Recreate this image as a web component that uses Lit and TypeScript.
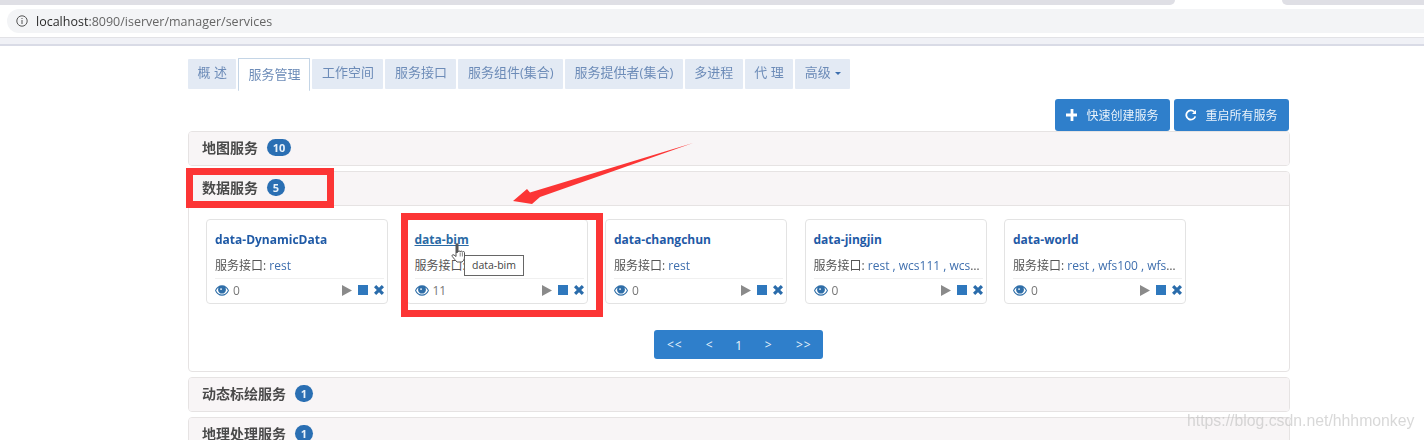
import { LitElement, html, css, svg } from "lit";
import { customElement } from "lit/decorators.js";

const eye = html`<svg class="eye" viewBox="0 0 16 12" width="14" height="11"><path fill="#2f6ea8" d="M8 0C4.400 0 1.500 2.200 0 6c1.500 3.800 4.400 6 8 6s6.500-2.200 8-6c-1.500-3.800-4.400-6-8-6zm0 10.600C5.100 10.600 2.700 8.900 1.300 6 2 4.600 3 3.400 4.200 2.600 3.800 3.300 3.500 4.100 3.500 5c0 2.500 2 4.500 4.500 4.500s4.500-2 4.500-4.500c0-.9-.3-1.700-.7-2.400C13 3.400 14 4.600 14.700 6c-1.400 2.900-3.800 4.600-6.700 4.600z"/><circle cx="8" cy="5.500" r="2.700" fill="#2f6ea8"/><circle cx="6.900" cy="4.300" r="1" fill="#fff"/></svg>`;

const actions = html`<span class="acts">
  <svg viewBox="0 0 10 11" width="10" height="11"><path fill="#8a8a8a" d="M0 0l10 5.500L0 11z"/></svg>
  <svg viewBox="0 0 10 10" width="10" height="10"><rect width="10" height="10" fill="#2f78bd"/></svg>
  <svg viewBox="0 0 10 10" width="10" height="10"><path fill="#2a6cab" d="M2.200 0L5 2.800 7.800 0 10 2.200 7.200 5 10 7.800 7.800 10 5 7.200 2.200 10 0 7.800 2.800 5 0 2.200z"/></svg>
</span>`;

interface Card { name: string; links: string; count: string; hover?: boolean }
const cards: Card[] = [
  { name: "data-DynamicData", links: "rest", count: "0" },
  { name: "data-bim", links: "rest", count: "11", hover: true },
  { name: "data-changchun", links: "rest", count: "0" },
  { name: "data-jingjin", links: "rest , wcs111 , wcs130 , wfs100", count: "0" },
  { name: "data-world", links: "rest , wfs100 , wfs200 , wcs111", count: "0" },
];
const tabs = ["概 述", "服务管理", "工作空间", "服务接口", "服务组件(集合)", "服务提供者(集合)", "多进程", "代 理"];

@customElement("app-root")
export class AppRoot extends LitElement {
  static styles = css`
    :host { display: block; position: relative; width: 1424px; height: 440px; overflow: hidden; background: #fff;
      font-family: "Open Sans", "Noto Sans CJK SC", sans-serif; font-size: 12px; color: #555; }
    .soft { filter: blur(0.35px); height: 440px; }
    .tabstrip { display: flex; height: 5px; }
    .tabstrip i { background: #dfdfe5; flex: 1; }
    .tabstrip i:first-child { flex: 0 0 1175px; border-bottom-right-radius: 5px; }
    .tabstrip i:last-child { border-bottom-left-radius: 5px; }
    .tabstrip b { width: 107px; }
    .addr { display: flex; align-items: center; height: 24px; margin: 4px 0 0 7px; padding-left: 9px; gap: 8px;
      background: #f3f4f6; border-radius: 12px 0 0 12px; font-size: 12.500px; color: #666; font-family: "Open Sans", sans-serif; }
    .addr strong { font-weight: 400; color: #2b2b2b; }
    .strip { height: 6px; margin-top: 4px; background: #f0f1f6; border-top: 1px solid #e2e2e6; border-bottom: 2px solid #d9dbe6; }
    main { padding: 12px 134.500px 0 188px; }
    .tabs { display: flex; gap: 2px; align-items: flex-start; height: 41px; }
    .tab { height: 30px; line-height: 26px; padding: 0 9.500px; background: #e3eaf4; color: #6d8cb8; font-size: 13px; white-space: nowrap; border-radius: 1px; box-sizing: border-box; margin-top: 1px; }
    .tab.active { height: 33px; margin-top: 0; line-height: 31px; background: #fff; border: 1px solid #c4d5e6; border-bottom: 0; padding: 0 9px; }
    .caret { display: inline-block; margin-left: 4px; vertical-align: 2px; border: 3.500px solid transparent; border-top-color: #3d6fae; border-bottom: 0; }
    .btns { display: flex; justify-content: flex-end; gap: 4px; margin-right: 1px; }
    .btn { display: flex; align-items: center; gap: 9px; height: 32px; width: 115px; box-sizing: border-box; padding: 0 11px; background: #2f7fcb; color: #eaf3fb; border-radius: 3px; font-size: 12px; white-space: nowrap; }
    .panel { border: 1px solid #e6e3e3; border-radius: 4px; margin-bottom: 5px; overflow: hidden; background: #fff; }
    .head { display: flex; align-items: center; gap: 9px; height: 33px; box-sizing: border-box; padding: 0 0 3px 13px; background: #f8f5f6; font-size: 14px; font-weight: 700; color: #4a4a4a; }
    .badge { display: inline-flex; align-items: center; justify-content: center; min-width: 18px; height: 17px; border-radius: 9px; background: #2a6fb3; color: #e9f2fa; font-size: 11px; font-weight: 700; }
    .badge.wide { min-width: 24px; }
    .body { border-top: 1px solid #e6e3e3; padding: 13px 17px 12px; }
    .cards { display: flex; gap: 17.500px; }
    .card { width: 182px; height: 85px; box-sizing: border-box; border: 1px solid #e3e3e3; border-radius: 4px; padding: 11px 3px 0 8px; background: #fff; }
    .title { display: block; height: 18px; line-height: 18px; font-size: 12px; font-weight: 700; color: #1f5aa6; white-space: nowrap; }
    .title.hover { color: #2a6aa5; text-decoration: underline; }
    .svc { height: 18px; line-height: 18px; margin-top: 8px; font-size: 12px; color: #555; white-space: nowrap; overflow: hidden; text-overflow: ellipsis; width: 168px; }
    .svc span { color: #3f6fae; }
    .foot { display: flex; align-items: center; justify-content: space-between; height: 22px; margin-top: 3px; border-top: 1px solid #f0f0f0; color: #777; }
    .views { display: flex; align-items: center; gap: 4px; }
    .acts { display: flex; align-items: center; gap: 6px; }
    .pager-wrap { display: flex; justify-content: center; margin-top: 26px; }
    .pager { display: flex; height: 29px; align-items: center; background: #2f7fcb; color: #e6f1fa; border-radius: 3px; font-size: 12px; }
    .pager span { text-align: center; width: 30px; letter-spacing: 1px; box-sizing: border-box; padding-left: 1px; }
    .pager span.end { width: 40px; }
    .pager span.cur { width: 29px; font-size: 13px; letter-spacing: 0; padding-left: 0; }
    .box { position: absolute; border: 7px solid #fc3535; box-sizing: border-box; }
    .box1 { left: 186px; top: 168px; width: 148px; height: 40px; }
    .box2 { left: 401px; top: 213px; width: 202px; height: 104px; }
    .arrow { position: absolute; left: 0; top: 0; }
    .tip { position: absolute; left: 464px; top: 255px; width: 60px; height: 21px; box-sizing: border-box; border: 1px solid #666; background: #fff; font-size: 10.500px; line-height: 19px; text-align: center; color: #444; }
    .hand { position: absolute; left: 451px; top: 243px; }
    .mark { position: absolute; left: 1187px; top: 412px; font-family: "Liberation Sans", sans-serif; font-size: 15.800px; color: rgba(190,190,190,.6); white-space: nowrap; filter: blur(0.5px); }
  `;

  private panel(name: string, n: string, wide = false) {
    return html`<section class="panel"><div class="head">${name}<span class="badge ${wide ? "wide" : ""}">${n}</span></div></section>`;
  }

  render() {
    return html`
      <div class="soft">
        <div class="tabstrip"><i></i><b></b><i></i></div>
        <div class="addr">
          <svg viewBox="0 0 12 12" width="12" height="12"><circle cx="6" cy="6" r="5.200" fill="none" stroke="#555" stroke-width="1"/><rect x="5.500" y="5" width="1" height="4" fill="#555"/><rect x="5.500" y="3" width="1" height="1" fill="#555"/></svg>
          <div><strong>localhost</strong>:8090/iserver/manager/services</div>
        </div>
        <div class="strip"></div>
        <main>
          <div class="tabs">
            ${tabs.map((t, i) => html`<div class="tab ${i === 1 ? "active" : ""}">${t}</div>`)}
            <div class="tab">高级<span class="caret"></span></div>
          </div>
          <div class="btns">
            <div class="btn"><svg viewBox="0 0 12 12" width="12" height="12"><path fill="#fff" d="M4.600 0h2.800v4.600H12v2.800H7.400V12H4.600V7.400H0V4.600h4.600z"/></svg>快速创建服务</div>
            <div class="btn"><svg viewBox="0 0 12 12" width="12" height="12"><path fill="none" stroke="#fff" stroke-width="1.800" d="M10.300 7.400A4.600 4.600 0 1 1 9.300 2.900"/><path fill="#fff" d="M11.500 0.500v4.500H7z"/></svg>重启所有服务</div>
          </div>
          ${this.panel("地图服务", "10", true)}
          <section class="panel">
            <div class="head">数据服务<span class="badge">5</span></div>
            <div class="body">
              <div class="cards">
                ${cards.map((c) => html`<article class="card">
                  <a class="title ${c.hover ? "hover" : ""}">${c.name}</a>
                  <div class="svc">服务接口: <span>${c.links}</span></div>
                  <div class="foot"><span class="views">${eye}${c.count}</span>${actions}</div>
                </article>`)}
              </div>
              <div class="pager-wrap"><div class="pager">
                <span class="end">&lt;&lt;</span><span>&lt;</span><span class="cur">1</span><span>&gt;</span><span class="end">&gt;&gt;</span>
              </div></div>
            </div>
          </section>
          ${this.panel("动态标绘服务", "1")}
          ${this.panel("地理处理服务", "1")}
        </main>
      </div>
      <div class="box box1"></div>
      <div class="box box2"></div>
      <svg class="arrow" width="1424" height="440">${svg`<path fill="#fc3535" d="M513 201L527 189L530 192.500L693 143L540 197L532 204z"/>`}</svg>
      <div class="tip">data-bim</div>
      <svg class="hand" width="16" height="20" viewBox="0 0 16 20"><path fill="#fff" stroke="#555" stroke-width="1" d="M5 8V1.500c0-1.300 2-1.300 2 0V9c.2-1.500 2-1.500 2.200 0 .2-1.300 2-1.300 2.200.2.300-1 2-1 2.100.3V14c0 2.500-1.200 4-2.500 5H6C4.500 17.500 3 15.500 1.300 13.500.5 12.500 1.500 11 3 12l2 1.500z"/><path fill="none" stroke="#555" stroke-width=".7" d="M9.200 9.500v4M11.400 9.500v4"/><path stroke="#333" stroke-width="1.400" d="M6 1v9"/></svg>
      <div class="mark">https://blog.csdn.net/hhhmonkey</div>
    `;
  }
}
